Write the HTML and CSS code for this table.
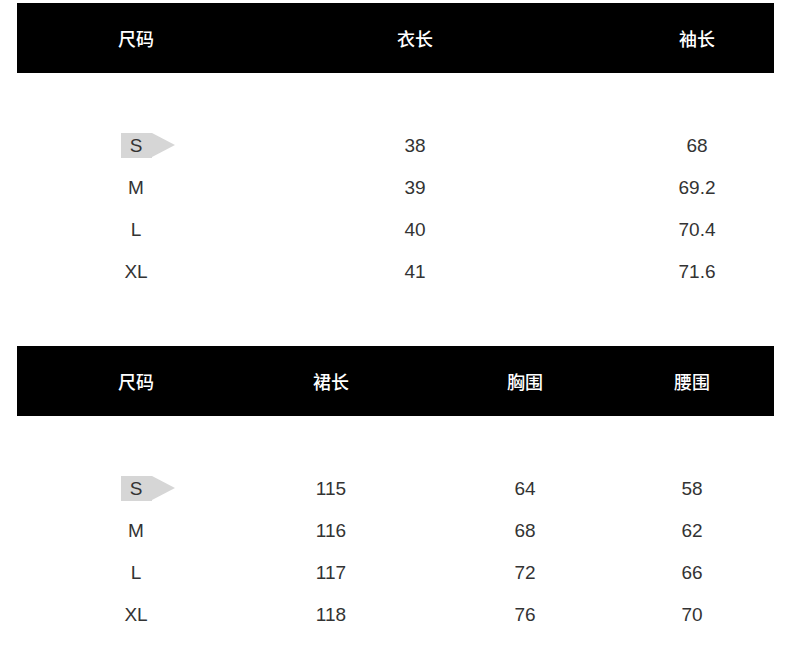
FILE: index.html
```html
<!DOCTYPE html>
<html lang="zh">
<head>
<meta charset="utf-8">
<link rel="stylesheet" href="styles.css">
</head>
<body>
<div class="page">
  <section class="table t1">
    <div class="head row">
      <div class="cell">尺码</div>
      <div class="cell">衣长</div>
      <div class="cell">袖长</div>
    </div>
    <div class="body">
      <div class="row"><div class="cell"><span class="tag">S</span></div><div class="cell">38</div><div class="cell">68</div></div>
      <div class="row"><div class="cell">M</div><div class="cell">39</div><div class="cell">69.2</div></div>
      <div class="row"><div class="cell">L</div><div class="cell">40</div><div class="cell">70.4</div></div>
      <div class="row"><div class="cell">XL</div><div class="cell">41</div><div class="cell">71.6</div></div>
    </div>
  </section>
  <section class="table t2">
    <div class="head row">
      <div class="cell">尺码</div>
      <div class="cell">裙长</div>
      <div class="cell">胸围</div>
      <div class="cell">腰围</div>
    </div>
    <div class="body">
      <div class="row"><div class="cell"><span class="tag">S</span></div><div class="cell">115</div><div class="cell">64</div><div class="cell">58</div></div>
      <div class="row"><div class="cell">M</div><div class="cell">116</div><div class="cell">68</div><div class="cell">62</div></div>
      <div class="row"><div class="cell">L</div><div class="cell">117</div><div class="cell">72</div><div class="cell">66</div></div>
      <div class="row"><div class="cell">XL</div><div class="cell">118</div><div class="cell">76</div><div class="cell">70</div></div>
    </div>
  </section>
</div>
</body>
</html>
```
FILE: styles.css
```css
html, body {
  margin: 0;
  padding: 0;
  background: #ffffff;
}
.page {
  width: 790px;
  height: 659px;
  padding: 3px 16px 0 17px;
  box-sizing: border-box;
  font-family: "Liberation Sans", Arial, "Noto Sans CJK SC", sans-serif;
}
.table {
  display: flex;
  flex-direction: column;
}
.t2 {
  margin-top: 54px;
}
.row {
  display: grid;
  justify-items: start;
  align-items: center;
  padding-left: 59px;
}
.t1 .row {
  grid-template-columns: 279px 282px 120px;
}
.t2 .row {
  grid-template-columns: 195px 194px 167px 120px;
}
.cell {
  width: 120px;
  text-align: center;
  display: flex;
  justify-content: center;
  align-items: center;
}
.head {
  background: #000000;
  height: 70px;
  color: #ffffff;
  font-family: "Noto Sans CJK SC", sans-serif;
  font-size: 18px;
  font-weight: 500;
}
.head .cell {
  padding-bottom: 1px;
}
.body {
  padding-top: 51px;
  display: flex;
  flex-direction: column;
}
.body .row {
  height: 42px;
  color: #333333;
  font-size: 19px;
}
.body .cell {
  padding-top: 2px;
}
.tag {
  position: relative;
  display: inline-block;
  width: 31px;
  height: 25px;
  line-height: 25px;
  background: #d6d6d6;
  text-align: center;
  margin-top: -2px;
}
.tag::after {
  content: "";
  position: absolute;
  left: 31px;
  top: 0;
  border-left: 23px solid #d6d6d6;
  border-top: 12.5px solid transparent;
  border-bottom: 12.5px solid transparent;
}
```
